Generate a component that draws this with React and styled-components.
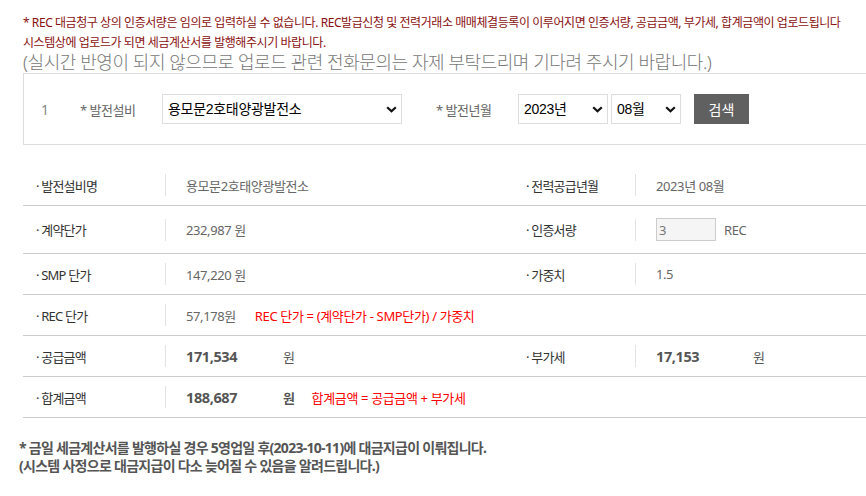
import React from "react";
import styled, { createGlobalStyle } from "styled-components";

const GlobalStyle = createGlobalStyle`
  html, body {
    margin: 0;
    padding: 0;
    background: #fff;
    overflow: hidden;
  }
  body {
    font-family: "Noto Sans", "Noto Sans CJK KR", sans-serif;
  }
`;

const rows = [
  {
    label: "발전설비명",
    value: "용모문2호태양광발전소",
    label2: "전력공급년월",
    value2: "2023년 08월",
  },
];

const App = () => {
  return (
    <Page>
      <GlobalStyle />
      <Notice>
        * REC 대금청구 상의 인증서량은 임의로 입력하실 수 없습니다. REC발급신청 및 전력거래소 매매체결등록이 이루어지면 인증서량, 공급금액, 부가세, 합계금액이 업로드됩니다
      </Notice>
      <Notice>시스템상에 업로드가 되면 세금계산서를 발행해주시기 바랍니다.</Notice>
      <Title>(실시간 반영이 되지 않으므로 업로드 관련 전화문의는 자제 부탁드리며 기다려 주시기 바랍니다.)</Title>

      <SearchBox>
        <SearchNo>1</SearchNo>
        <SearchLabel>* 발전설비</SearchLabel>
        <SelectWrap width={240}>
          <Select defaultValue="a">
            <option value="a">용모문2호태양광발전소</option>
          </Select>
          <Chevron />
        </SelectWrap>
        <SearchLabel style={{ marginLeft: 34 }}>* 발전년월</SearchLabel>
        <SelectWrap width={90}>
          <Select defaultValue="2023">
            <option value="2023">2023년</option>
          </Select>
          <Chevron />
        </SelectWrap>
        <SelectWrap width={70} gap={3}>
          <Select defaultValue="08">
            <option value="08">08월</option>
          </Select>
          <Chevron />
        </SelectWrap>
        <SearchButton>검색</SearchButton>
      </SearchBox>

      <Table>
        {rows.map((r) => (
          <Row key={r.label}>
            <Label>· {r.label}</Label>
            <Value>{r.value}</Value>
            <Label>· {r.label2}</Label>
            <Value>{r.value2}</Value>
          </Row>
        ))}
        <Row tall>
          <Label>· 계약단가</Label>
          <Value>232,987 원</Value>
          <Label>· 인증서량</Label>
          <Value>
            <CountInput value="3" readOnly />
            <span>REC</span>
          </Value>
        </Row>
        <Row>
          <Label>· SMP 단가</Label>
          <Value>147,220 원</Value>
          <Label>· 가중치</Label>
          <Value>1.5</Value>
        </Row>
        <Row>
          <Label>· REC 단가</Label>
          <Value wide>
            57,178원
            <Formula gap={19}>REC 단가 = (계약단가 - SMP단가) / 가중치</Formula>
          </Value>
        </Row>
        <Row>
          <Label>· 공급금액</Label>
          <Value>
            <Amount>171,534</Amount>
            <Unit>원</Unit>
          </Value>
          <Label>· 부가세</Label>
          <Value>
            <Amount>17,153</Amount>
            <Unit>원</Unit>
          </Value>
        </Row>
        <Row>
          <Label>· 합계금액</Label>
          <Value wide>
            <Amount>188,687</Amount>
            <Unit bold>원</Unit>
            <Formula gap={17}>합계금액 = 공급금액 + 부가세</Formula>
          </Value>
        </Row>
      </Table>

      <Footer>
        <div>* 금일 세금계산서를 발행하실 경우 5영업일 후(2023-10-11)에 대금지급이 이뤄집니다.</div>
        <div>(시스템 사정으로 대금지급이 다소 늦어질 수 있음을 알려드립니다.)</div>
      </Footer>
    </Page>
  );
};

const Chevron = () => (
  <ChevronIcon width="11" height="7" viewBox="0 0 11 7">
    <path d="M1.2 1.2 L5.5 5.3 L9.8 1.2" fill="none" stroke="#111" strokeWidth="2.2" />
  </ChevronIcon>
);

const Page = styled.div`
  width: 880px;
  padding: 13px 0 0 23px;
  box-sizing: border-box;
`;

const Notice = styled.div`
  font-family: "Noto Sans", "Noto Sans CJK KR", sans-serif;
  font-size: 12px;
  letter-spacing: -0.43px;
  line-height: 20px;
  color: #8a1010;
  white-space: nowrap;
`;

const Title = styled.div`
  font-family: "Noto Sans", "Noto Sans CJK KR", sans-serif;
  font-size: 18px;
  letter-spacing: -0.44px;
  line-height: 22px;
  color: #777;
  font-weight: 300;
  margin-top: -2px;
  white-space: nowrap;
`;

const SearchBox = styled.div`
  display: flex;
  align-items: center;
  height: 72px;
  border: 1px solid #ddd;
  box-sizing: border-box;
`;

const SearchNo = styled.div`
  width: 56px;
  padding-left: 17px;
  box-sizing: border-box;
  font-size: 14px;
  color: #888;
`;

const SearchLabel = styled.div`
  width: 82px;
  flex-shrink: 0;
  font-size: 13px;
  letter-spacing: -0.5px;
  color: #666;
`;

const SelectWrap = styled.div`
  position: relative;
  width: ${(p) => p.width}px;
  margin-left: ${(p) => p.gap || 0}px;
  height: 30px;
`;

const Select = styled.select`
  appearance: none;
  width: 100%;
  height: 30px;
  border: 1px solid #ddd;
  background: #fff;
  padding: 0 0 0 5px;
  box-sizing: border-box;
  font-family: "Liberation Sans", "Noto Sans CJK KR", sans-serif;
  font-size: 14px;
  letter-spacing: -0.3px;
  color: #000;
  border-radius: 0;
  outline: none;
`;

const ChevronIcon = styled.svg`
  position: absolute;
  right: 5px;
  top: 12px;
  pointer-events: none;
`;

const SearchButton = styled.button`
  width: 55px;
  height: 30px;
  margin-left: 13px;
  border: none;
  background: #606060;
  color: #fff;
  font-family: "Noto Sans CJK KR", sans-serif;
  font-size: 14px;
  cursor: pointer;
`;

const Table = styled.div`
  margin-top: 20px;
`;

const Row = styled.div`
  display: grid;
  grid-template-columns: 142px 348px 122px 1fr;
  align-items: center;
  height: ${(p) => (p.tall ? 47 : 40)}px;
  border-bottom: 1px solid #ccc;
`;

const Label = styled.div`
  padding-left: 13px;
  font-family: "Noto Sans", "Noto Sans CJK KR", sans-serif;
  font-size: 13px;
  letter-spacing: -0.8px;
  color: #333;
`;

const Value = styled.div`
  display: flex;
  align-items: center;
  height: 22px;
  border-left: 1px solid #e3e3e3;
  padding-left: 20px;
  font-family: "Noto Sans", "Noto Sans CJK KR", sans-serif;
  font-size: 13px;
  letter-spacing: -0.4px;
  color: #666;
  white-space: nowrap;
  ${(p) => (p.wide ? "grid-column: 2 / span 3;" : "")}
`;

const CountInput = styled.input`
  width: 60px;
  height: 23px;
  box-sizing: border-box;
  border: 1px solid #ccc;
  background: #f5f5f5;
  padding: 0 2px;
  margin-right: 8px;
  font-family: "Noto Sans", sans-serif;
  font-size: 13px;
  color: #777;
  outline: none;
`;

const Amount = styled.span`
  display: inline-block;
  width: 97px;
  font-size: 14.5px;
  font-weight: bold;
  color: #555;
`;

const Unit = styled.span`
  color: #555;
  font-weight: ${(p) => (p.bold ? "bold" : "normal")};
`;

const Formula = styled.span`
  margin-left: ${(p) => p.gap}px;
  color: #f00;
  font-size: 13px;
  letter-spacing: -0.35px;
`;

const Footer = styled.div`
  margin-top: 21px;
  margin-left: -4px;
  font-family: "Noto Sans", "Noto Sans CJK KR", sans-serif;
  font-size: 14px;
  font-weight: bold;
  letter-spacing: -0.72px;
  line-height: 18px;
  color: #555;
`;

export default App;
